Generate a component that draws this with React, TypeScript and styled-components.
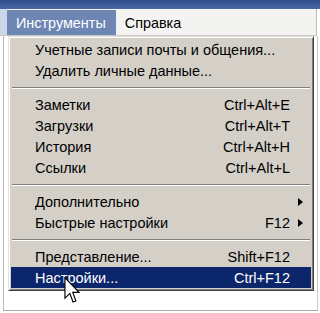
import React from "react";
import styled, { createGlobalStyle } from "styled-components";

const Global = createGlobalStyle`
  html, body { margin: 0; padding: 0; background: #ffffff; }
  body { font-family: "Liberation Sans", Arial, sans-serif; }
  #root { width: 320px; height: 313px; overflow: hidden; }
`;

const Screen = styled.div`
  position: relative;
  width: 320px;
  height: 313px;
  background: #ffffff;
  overflow: hidden;
  display: flex;
  flex-direction: column;
`;

const TitleStrip = styled.div`
  height: 9px;
  flex: none;
  background: linear-gradient(180deg, #2f4d8e 0%, #4b68a6 100%);
`;

const MenuBar = styled.div`
  height: 26px;
  flex: none;
  display: flex;
  align-items: stretch;
  background: #f3f3f1;
  border-bottom: 1px solid #c9c9c4;
  padding-left: 7px;
  box-shadow: inset 7px 0 0 #cdd6e6;
  margin-right: 3px;
  border-right: 1px solid #bdbdb8;
`;

const BarItem = styled.div<{ $active?: boolean }>`
  display: flex;
  align-items: center;
  padding: 1px 10px 0 9px;
  font-size: 14.4px;
  color: ${(p) => (p.$active ? "#ffffff" : "#000000")};
  background: ${(p) => (p.$active ? "#6e86b4" : "transparent")};
  margin-top: 1px;
`;

const Body = styled.div`
  flex: 1;
  margin: 0 2px 2px 3px;
  border-left: 1px solid #b8b8b8;
  border-right: 1px solid #c8c8c8;
  border-bottom: 1px solid #a8a8a8;
  background: #ffffff;
`;

const Dropdown = styled.div`
  position: absolute;
  left: 8px;
  top: 36px;
  width: 306px;
  box-sizing: border-box;
  background: #d4d0c8;
  border-style: solid;
  border-width: 1px;
  border-color: #e4e1dc #404040 #404040 #e4e1dc;
  box-shadow: inset 1px 1px 0 #ffffff, inset -1px -1px 0 #808080;
  padding: 2px;
  display: flex;
  flex-direction: column;
`;

const Row = styled.div<{ $selected?: boolean }>`
  height: 21px;
  display: grid;
  grid-template-columns: 1fr auto 21px;
  align-items: center;
  padding-left: 24px;
  font-size: 14.5px;
  color: ${(p) => (p.$selected ? "#ffffff" : "#000000")};
  background: ${(p) => (p.$selected ? "#0c266c" : "transparent")};
  white-space: nowrap;
`;

const Label = styled.span``;

const Shortcut = styled.span`
  text-align: right;
`;

const ArrowCell = styled.span`
  display: flex;
  align-items: center;
  padding-left: 8px;
`;

const Arrow = styled.span`
  width: 0;
  height: 0;
  border-top: 4px solid transparent;
  border-bottom: 4px solid transparent;
  border-left: 5px solid #000000;
`;

const Separator = styled.div`
  height: 13px;
  display: flex;
  align-items: center;
  padding: 0 1px;
  &::before {
    content: "";
    flex: 1;
    height: 0;
    border-top: 1px solid #808080;
    border-bottom: 1px solid #ffffff;
  }
`;

const Cursor = styled.svg`
  position: absolute;
  left: 64px;
  top: 277px;
  width: 16px;
  height: 27px;
`;

type Item =
  | { sep: true }
  | { sep?: false; label: string; shortcut?: string; sub?: boolean; selected?: boolean };

const items: Item[] = [
  { label: "Учетные записи почты и общения..." },
  { label: "Удалить личные данные..." },
  { sep: true },
  { label: "Заметки", shortcut: "Ctrl+Alt+E" },
  { label: "Загрузки", shortcut: "Ctrl+Alt+T" },
  { label: "История", shortcut: "Ctrl+Alt+H" },
  { label: "Ссылки", shortcut: "Ctrl+Alt+L" },
  { sep: true },
  { label: "Дополнительно", sub: true },
  { label: "Быстрые настройки", shortcut: "F12", sub: true },
  { sep: true },
  { label: "Представление...", shortcut: "Shift+F12" },
  { label: "Настройки...", shortcut: "Ctrl+F12", selected: true },
];

export default function App() {
  return (
    <>
      <Global />
      <Screen>
        <TitleStrip />
        <MenuBar>
          <BarItem $active>Инструменты</BarItem>
          <BarItem>Справка</BarItem>
        </MenuBar>
        <Body />
        <Dropdown>
          {items.map((it, i) =>
            it.sep ? (
              <Separator key={i} />
            ) : (
              <Row key={i} $selected={it.selected}>
                <Label>{it.label}</Label>
                <Shortcut>{it.shortcut ?? ""}</Shortcut>
                <ArrowCell>{it.sub ? <Arrow /> : null}</ArrowCell>
              </Row>
            )
          )}
        </Dropdown>
        <Cursor viewBox="0 0 12 21">
          <path
            d="M0.5 0.5 L0.5 16.5 L4.3 12.8 L6.8 19.5 L9 18.6 L6.6 12 L11.5 12 Z"
            fill="#ffffff"
            stroke="#000000"
            strokeWidth="0.9"
            strokeLinejoin="miter"
          />
        </Cursor>
      </Screen>
    </>
  );
}
